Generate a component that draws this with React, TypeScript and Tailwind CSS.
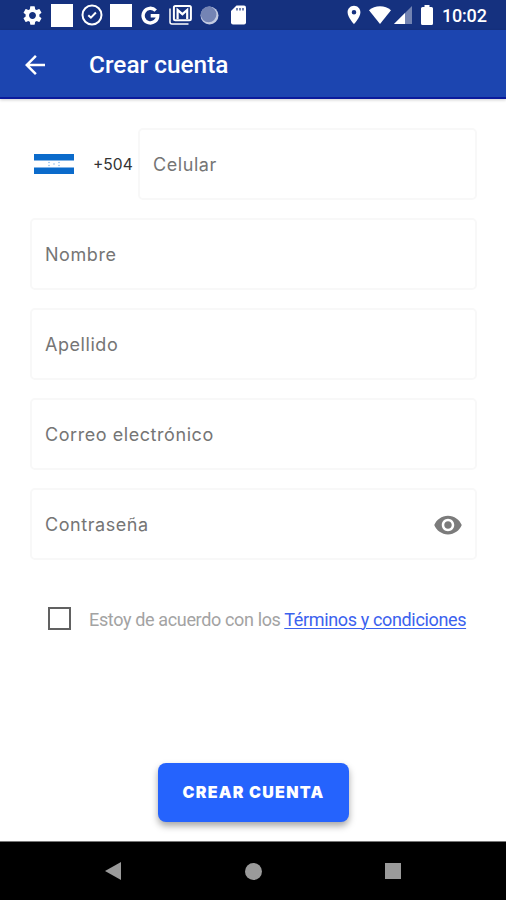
import { useState } from "react";
import {
  MdArrowBack,
  MdLocationOn,
  MdSettings,
  MdVisibility,
} from "react-icons/md";

const fields = ["Nombre", "Apellido", "Correo electrónico"];

const StatusBar = () => (
  <div className="flex h-[30px] shrink-0 items-center bg-[#15317f] pl-[21px] pr-[18px] text-white">
    <MdSettings className="size-[23px]" />
    <div className="ml-[7px] h-[23px] w-[22px] bg-white" />
    <svg className="ml-[8px] size-[22px]" viewBox="0 0 22 22" fill="none" stroke="currentColor">
      <circle cx="11" cy="11" r="9.5" strokeWidth="2" />
      <path d="M7.3 11.2l2.6 2.5 5-5.2" strokeWidth="2" />
    </svg>
    <div className="ml-[7px] h-[23px] w-[22px] bg-white" />
    {/* Google */}
    <svg className="ml-[9px] h-[19px] w-[19px]" viewBox="0 0 19 19" fill="none" stroke="currentColor">
      <path d="M14.7 4.6A7.3 7.3 0 1 0 16.7 9.7H9.7" strokeWidth="3.4" />
    </svg>
    {/* Gmail */}
    <svg className="ml-[9px] h-[20px] w-[23px]" viewBox="0 0 23 20" fill="none" stroke="currentColor">
      <path d="M1 3.5V17a2 2 0 0 0 2 2h16.5" strokeWidth="1.5" />
      <rect x="4.9" y="1" width="17" height="14.2" rx="1.5" strokeWidth="2" />
      <path d="M8.6 14V5l4.8 4.2L18.2 5v9" strokeWidth="2.2" />
    </svg>
    <svg className="ml-[8px] size-[19px]" viewBox="0 0 19 19">
      <circle cx="9.5" cy="9.5" r="9" fill="#c3cbe2" />
      <circle cx="8.6" cy="8.4" r="7.8" fill="#7484b4" />
    </svg>
    {/* Tarjeta SD */}
    <svg className="ml-[11px] h-[20px] w-[17px]" viewBox="0 0 17 20" fill="currentColor">
      <path d="M6.5.5H14a2 2 0 0 1 2 2v15a2 2 0 0 1-2 2H3a2 2 0 0 1-2-2V6z" />
      <path d="M7 3v2.6M10 3v2.6M13 3v2.6" stroke="#15317f" strokeWidth="1.2" />
    </svg>

    <MdLocationOn className="ml-auto size-[22px]" />
    <svg className="ml-[4px] h-[18px] w-[22px]" viewBox="0 0 22 18" fill="currentColor">
      <path d="M11 18L0 4.3C3 1.7 6.8.3 11 .3s8 1.4 11 4z" />
    </svg>
    <svg className="ml-[3px] size-[18px]" viewBox="0 0 18 18" fill="currentColor">
      <path d="M18 0v18H0z" opacity=".4" />
      <path d="M11 7v11H0z" />
    </svg>
    <svg className="ml-[9px] h-[20px] w-[12px]" viewBox="0 0 12 20" fill="currentColor">
      <path d="M3.5 0h5v2h2A1.5 1.5 0 0 1 12 3.500v15a1.500 1.500 0 0 1-1.500 1.500h-9A1.500 1.500 0 0 1 0 18.500v-15A1.500 1.500 0 0 1 1.500 2h2z" />
    </svg>
    <span className="ml-[9px] w-[46px] whitespace-nowrap pt-[2px] font-['Roboto',sans-serif] text-[18px] font-medium leading-none tracking-[-0.2px]">
      10:02
    </span>
  </div>
);

const Field = ({ label, password }: { label: string; password?: boolean }) => (
  <div className="flex h-[72px] w-full items-center justify-between rounded-[5px] border-2 border-[#f8f8f8] px-[13px] pt-[2px]">
    <span className="font-['Inter',sans-serif] text-[18px] leading-6 tracking-[0.56px] text-[#757575]">
      {label}
    </span>
    {password && <MdVisibility className="-mr-px size-[30px] text-[#7b7b7b]" />}
  </div>
);

const App = () => {
  const [accepted, setAccepted] = useState(false);

  return (
    <div className="flex h-[900px] w-[506px] flex-col overflow-hidden bg-white">
      <StatusBar />

      <header className="flex h-[69px] shrink-0 items-center border-b-2 border-[#0a1a9c] bg-[#1c45b0] pl-[20px] pt-[2px] text-white shadow-[0_1px_3px_rgba(0,0,0,0.2)]">
        <MdArrowBack className="size-[30px]" />
        <h1 className="ml-[39px] pt-[2px] font-['Roboto',sans-serif] text-[24.4px] font-medium">Crear cuenta</h1>
      </header>

      <main className="flex flex-1 flex-col pl-[30px] pr-[29px] pt-[29.4px]">
        <div className="flex flex-col gap-[17.8px]">
          <div className="flex items-center">
            {/* Bandera de Honduras */}
            <svg className="ml-[4px] h-[20px] w-[40px] shrink-0" viewBox="0 0 40 20">
              <path d="M0 0h40v6.5H0zM0 13.5h40V20H0z" fill="#0b6bcb" />
              <g fill="#8fbce8">
                <circle cx="15" cy="8.5" r=".8" />
                <circle cx="25" cy="8.5" r=".8" />
                <circle cx="20" cy="10" r=".8" />
                <circle cx="15" cy="11.5" r=".8" />
                <circle cx="25" cy="11.5" r=".8" />
              </g>
            </svg>
            <span className="ml-[19px] w-[45px] shrink-0 whitespace-nowrap font-['Inter',sans-serif] text-[15.6px] text-[#333]">
              +504
            </span>
            <Field label="Celular" />
          </div>
          {fields.map((label) => (
            <Field key={label} label={label} />
          ))}
          <Field label="Contraseña" password />
        </div>

        <div className="mt-[46px] flex items-center pl-[18px]">
          <button
            onClick={() => setAccepted(!accepted)}
            className={`size-[23px] shrink-0 border-2 border-[#616161] ${accepted ? "bg-blue-600" : "bg-white"}`}
          />
          <p className="ml-[18px] whitespace-nowrap pt-[2px] font-['Roboto',sans-serif] text-[18px] leading-6 tracking-[-0.355px] text-[#a3a3a3]">
            Estoy de acuerdo con los{" "}
            <a className="text-[#3b62ee] underline decoration-1 underline-offset-2">Términos y condiciones</a>
          </p>
        </div>

        <button className="mx-auto mb-[19px] mt-auto h-[59px] w-[191px] rounded-[8px] bg-[#2563fd] pb-[2px] font-['Inter',sans-serif] text-[16px] font-black tracking-[1.25px] text-white shadow-[0_4px_7px_rgba(0,0,0,0.35)]">
          CREAR CUENTA
        </button>
      </main>

      {/* Barra de navegación */}
      <nav className="flex h-[59px] shrink-0 items-center justify-between border-t border-[#777] bg-black pl-[105px] pr-[105px]">
        <svg className="h-[18px] w-[17px]" viewBox="0 0 17 18" fill="#9a9a9a">
          <path d="M16 0v18L0 9z" />
        </svg>
        <div className="size-[17px] rounded-full bg-[#9a9a9a]" />
        <div className="size-[16px] bg-[#9a9a9a]" />
      </nav>
    </div>
  );
};

export default App;
